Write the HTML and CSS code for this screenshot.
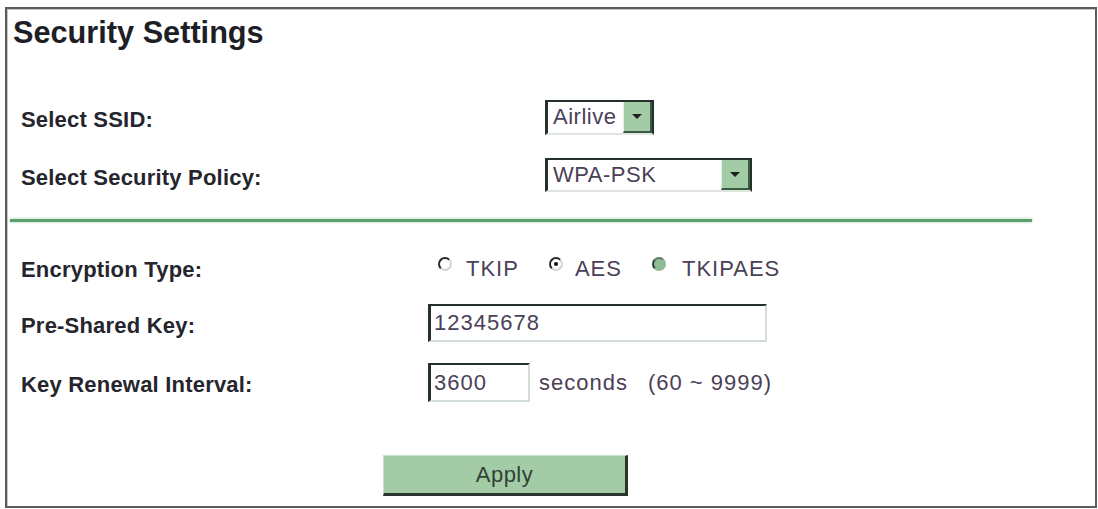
FILE: index.html
```html
<!DOCTYPE html>
<html lang="en">
<head>
  <meta charset="UTF-8" />
  <title>Security Settings</title>
  <link rel="stylesheet" href="styles.css">
</head>
<body>
  <div class="panel">
    <h1 class="title">Security Settings</h1>

    <div class="form-grid top">
      <div class="label">Select SSID:</div>
      <div class="select ssid">
        <span class="select-value">Airlive</span>
        <span class="select-btn"><i class="arrow"></i></span>
      </div>
      <div class="label">Select Security Policy:</div>
      <div class="select policy">
        <span class="select-value">WPA-PSK</span>
        <span class="select-btn"><i class="arrow"></i></span>
      </div>
    </div>

    <div class="divider"></div>

    <div class="form-grid bottom">
      <div class="label">Encryption Type:</div>
      <div class="radios">
        <label class="radio"><span class="circle"></span>TKIP</label>
        <label class="radio checked"><span class="circle"></span>AES</label>
        <label class="radio disabled"><span class="circle"></span>TKIPAES</label>
      </div>
      <div class="label">Pre-Shared Key:</div>
      <div class="control">
        <input class="field psk" type="text" value="12345678">
      </div>
      <div class="label">Key Renewal Interval:</div>
      <div class="control">
        <input class="field short" type="text" value="3600">
        <span class="unit">seconds</span>
        <span class="range">(60 ~ 9999)</span>
      </div>
    </div>

    <div class="actions">
      <button class="apply">Apply</button>
    </div>
  </div>
</body>
</html>
```

FILE: styles.css
```css
body {
  margin: 0;
  font-family: "Liberation Sans", Arial, sans-serif;
  background-color: #fff;
  color: #25252e;
}
.panel {
  box-sizing: border-box;
  margin: 7px 1px 1px 5px;
  height: 501px;
  border: 2px solid #5c5c5c;
  box-shadow: 1px 1px 0 #c8c8c8 inset;
}
.title {
  margin: 0;
  padding: 7px 0 0 6px;
  font-size: 30.7px;
  line-height: 34px;
  font-weight: bold;
  color: #1e1e26;
}
.form-grid {
  display: grid;
  padding-left: 14px;
  align-items: center;
}
.form-grid.top {
  margin-top: 50px;
  grid-template-columns: 524px auto;
  grid-template-rows: 35px 34px;
  row-gap: 23px;
}
.form-grid.bottom {
  margin-top: 29px;
  grid-template-columns: 407px auto;
  grid-template-rows: 32px 38px 39px;
  row-gap: 21px;
}
.label {
  font-size: 22px;
  font-weight: bold;
  line-height: 26px;
  padding-top: 5px;
  letter-spacing: 0.2px;
}

/* drop-down lists */
.select {
  box-sizing: border-box;
  display: flex;
  height: 35px;
  border-top: 2px solid #26302a;
  border-left: 3px solid #26302a;
  border-right: 2px solid #26302a;
  border-bottom: 2px solid #dfe6df;
  background-color: #fff;
}
.select.ssid { width: 109px; }
.select.policy { width: 207px; height: 34px; }
.select-value {
  flex: 1;
  padding-left: 5px;
  font-size: 22px;
  line-height: 30px;
  color: #4b4058;
  letter-spacing: 0.5px;
}
.select-btn {
  width: 26px;
  display: flex;
  align-items: center;
  justify-content: center;
  background-color: #a3cba6;
  border-right: 2px solid #3b5a42;
  border-bottom: 2px solid #3b5a42;
  border-left: 1px solid #e6f0e6;
}
.arrow {
  width: 0;
  height: 0;
  border-left: 5px solid transparent;
  border-right: 5px solid transparent;
  border-top: 5px solid #1f1f1f;
}

.divider {
  margin: 27px 0 0 3px;
  width: 1022px;
  height: 3px;
  background-color: #5f9f6d;
  box-shadow: 0 0 3px rgba(120, 185, 135, 0.7);
}

/* radio buttons */
.radios {
  display: flex;
  align-items: center;
  padding: 4px 0 0 10px;
  font-size: 22px;
  letter-spacing: 1px;
  color: #4b3f58;
}
.radio {
  display: flex;
  align-items: center;
  margin-right: 30px;
}
.radio .circle {
  box-sizing: border-box;
  width: 14px;
  height: 14px;
  margin: -10px 14px 0 0;
  border-radius: 50%;
  border: 2px solid #d4d4d4;
  border-top-color: #2a2a2a;
  border-left-color: #2a2a2a;
  background-color: #fff;
  position: relative;
}
.radio.checked .circle { margin-right: 12px; }
.radio.checked .circle::after {
  content: "";
  position: absolute;
  left: 3px;
  top: 3px;
  width: 4px;
  height: 4px;
  border-radius: 50%;
  background-color: #111;
}
.radio.disabled .circle {
  margin-right: 16px;
  background-color: #8fbc95;
  border-color: #8fbc95;
  border-left-color: #2f3d33;
  border-top-color: #5c7a62;
}

/* text boxes */
.control {
  display: flex;
  align-items: center;
  font-size: 22px;
  letter-spacing: 1px;
  color: #4b3f58;
}
.field {
  box-sizing: border-box;
  height: 38px;
  margin: 0;
  padding: 0 0 0 3px;
  font-family: inherit;
  font-size: 22px;
  letter-spacing: 1px;
  color: #4b3f58;
  border-top: 2px solid #26302a;
  border-left: 3px solid #26302a;
  border-right: 2px solid #d3ddd3;
  border-bottom: 2px solid #d3ddd3;
  outline: none;
}
.field.psk { width: 339px; }
.field.short { width: 102px; height: 39px; }
.unit { margin-left: 9px; }
.range { margin-left: 20px; }

.actions {
  margin: 53px 0 0 376px;
}
.apply {
  box-sizing: border-box;
  width: 245px;
  height: 41px;
  background-color: #a3cba6;
  border: 1px solid #c9e0ca;
  border-right: 3px solid #27352b;
  border-bottom: 3px solid #27352b;
  font-family: inherit;
  font-size: 22px;
  color: #2f4234;
  letter-spacing: 0.5px;
  cursor: pointer;
}
```
